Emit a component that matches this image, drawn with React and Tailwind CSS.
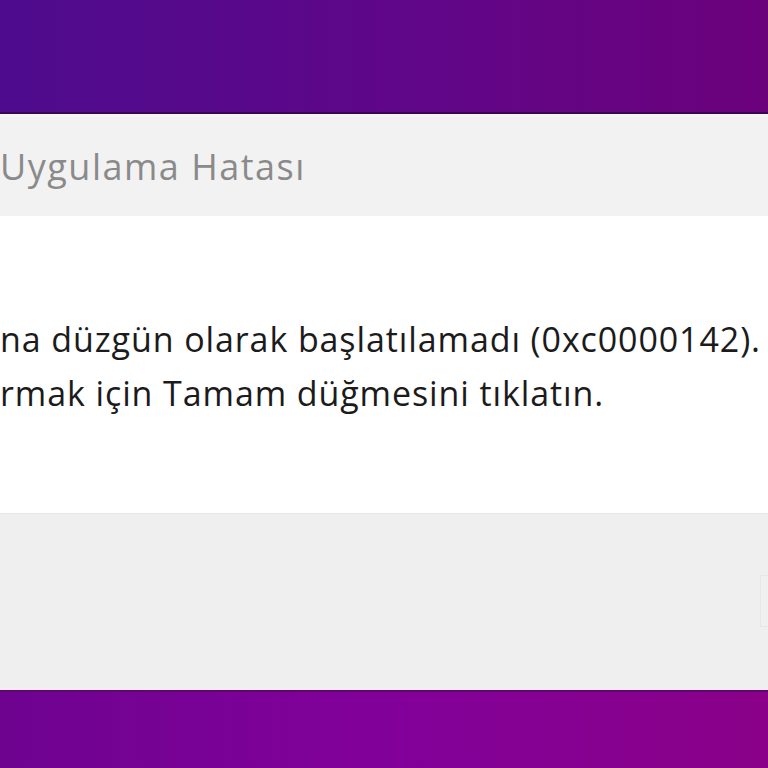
export default function App() {
  return (
    <div className="w-[768px] h-[768px] overflow-hidden flex flex-col bg-white" style={{ fontFamily: '"Open Sans", "Noto Sans", sans-serif' }}>
      {/* desktop background above */}
      <div className="h-[112px] shrink-0 bg-gradient-to-r from-[#4e0b8d] via-[#5f068a] to-[#6c017c]" />
      <div className="h-[2px] shrink-0 bg-[#3a0650]" />

      {/* dialog */}
      <div className="flex-1 flex flex-col">
        <div className="h-[3px] bg-[#f7f3fb]" />
        <div className="h-[99px] bg-[#f2f2f2] flex items-center">
          <span className="text-[36px] text-[#8a8a8a] whitespace-nowrap tracking-[1.5px]">Uygulama Hatası</span>
        </div>

        <div className="h-[297px] bg-white pt-[96px] overflow-hidden">
          <p className="text-[34px] leading-[54px] text-[#1b1b1b] whitespace-nowrap tracking-[0.9px]">
            na düzgün olarak başlatılamadı (0xc0000142).
            <br />
            rmak için Tamam düğmesini tıklatın.
          </p>
        </div>

        <div className="h-[175px] bg-[#efefef] border-t border-[#e6e6e6] flex items-center justify-end overflow-hidden">
          <div className="w-[40px] h-[52px] -mr-[32px] border border-[#e6e6e6] bg-[#f0f0f0]" />
        </div>
        <div className="h-[2px] bg-[#fbe8fb]" />
      </div>

      <div className="h-[2px] shrink-0 bg-[#5a0a6a]" />
      <div className="h-[77px] shrink-0 bg-gradient-to-r from-[#6e0390] via-[#82009a] to-[#8a0088]" />
    </div>
  );
}
